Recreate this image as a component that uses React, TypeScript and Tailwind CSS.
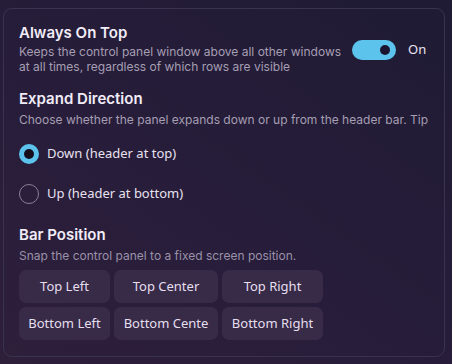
import React, { useState } from "react";

const positions = [
  { label: "Top Left", w: "w-[91px]" },
  { label: "Top Center", w: "w-[104px]" },
  { label: "Top Right", w: "w-[101px]" },
  { label: "Bottom Left", w: "w-[91px]" },
  { label: "Bottom Cente", w: "w-[104px]" },
  { label: "Bottom Right", w: "w-[101px]" },
];

const App: React.FC = () => {
  const [onTop, setOnTop] = useState(true);
  const [direction, setDirection] = useState("down");

  return (
    <div className="w-[452px] h-[364px] overflow-hidden bg-[linear-gradient(35deg,#2e1f3b_0%,#271d3a_45%,#1f1b34_100%)] pt-[8px] px-[3px] font-['Inter',sans-serif]">
      <div className="w-[442px] h-[349px] rounded-[9px] border border-[#3a3350] pt-[14px] px-[15px]">
        {/* always on top */}
        <div className="flex items-center">
          <div className="w-[325px]">
            <h3 className="text-[15px] leading-[20px] font-semibold text-[#f1ecf7]">Always On Top</h3>
            <p className="mt-[1px] text-[12px] leading-[15px] text-[#a69eb3]">
              Keeps the control panel window above all other windows at all times, regardless of which rows are visible
            </p>
          </div>
          <button
            className={`ml-[8px] mt-[3px] w-[44px] h-[20px] rounded-full flex items-center px-[6px] ${
              onTop ? "bg-[#5cc3ec] justify-end" : "bg-[#4a4060] justify-start"
            }`}
            onClick={() => setOnTop(!onTop)}
          >
            <span className="w-[10px] h-[10px] rounded-full bg-[#1b1430]" />
          </button>
          <span className="ml-[12px] mt-[2px] text-[13px] text-[#ebe5f2] font-['Noto_Sans',sans-serif]">
            {onTop ? "On" : "Off"}
          </span>
        </div>

        {/* expand direction */}
        <h3 className="mt-[15px] text-[15px] leading-[20px] font-semibold text-[#f1ecf7]">Expand Direction</h3>
        <p className="mt-[3px] text-[12px] leading-[15px] text-[#a69eb3] whitespace-nowrap">
          Choose whether the panel expands down or up from the header bar. Tip
        </p>
        <div className="mt-[7px] flex flex-col">
          {[
            { id: "down", label: "Down (header at top)" },
            { id: "up", label: "Up (header at bottom)" },
          ].map((opt) => (
            <button
              key={opt.id}
              className="flex items-center h-[40px] text-left"
              onClick={() => setDirection(opt.id)}
            >
              {direction === opt.id ? (
                <span className="w-[20px] h-[20px] rounded-full bg-[#5cc3ec] flex items-center justify-center">
                  <span className="w-[10px] h-[10px] rounded-full bg-[#170e1c]" />
                </span>
              ) : (
                <span className="w-[20px] h-[20px] rounded-full border-[1.5px] border-[#8b8096]" />
              )}
              <span className="ml-[8px] text-[13px] text-[#e8e1ef] font-['Noto_Sans',sans-serif]">{opt.label}</span>
            </button>
          ))}
        </div>

        {/* bar position */}
        <h3 className="mt-[11px] text-[15px] leading-[20px] font-semibold text-[#f1ecf7]">Bar Position</h3>
        <p className="mt-[3px] text-[12px] leading-[15px] text-[#9a91a8]">Snap the control panel to a fixed screen position.</p>
        <div className="mt-[7px] grid grid-cols-[91px_104px_101px] gap-x-[4px] gap-y-[4px]">
          {positions.map((p) => (
            <button
              key={p.label}
              className={`${p.w} h-[33px] rounded-[7px] bg-[#372b48] text-[13px] text-[#e6dfee] font-['Noto_Sans',sans-serif] whitespace-nowrap overflow-hidden`}
            >
              {p.label}
            </button>
          ))}
        </div>
      </div>
    </div>
  );
};

export default App;
